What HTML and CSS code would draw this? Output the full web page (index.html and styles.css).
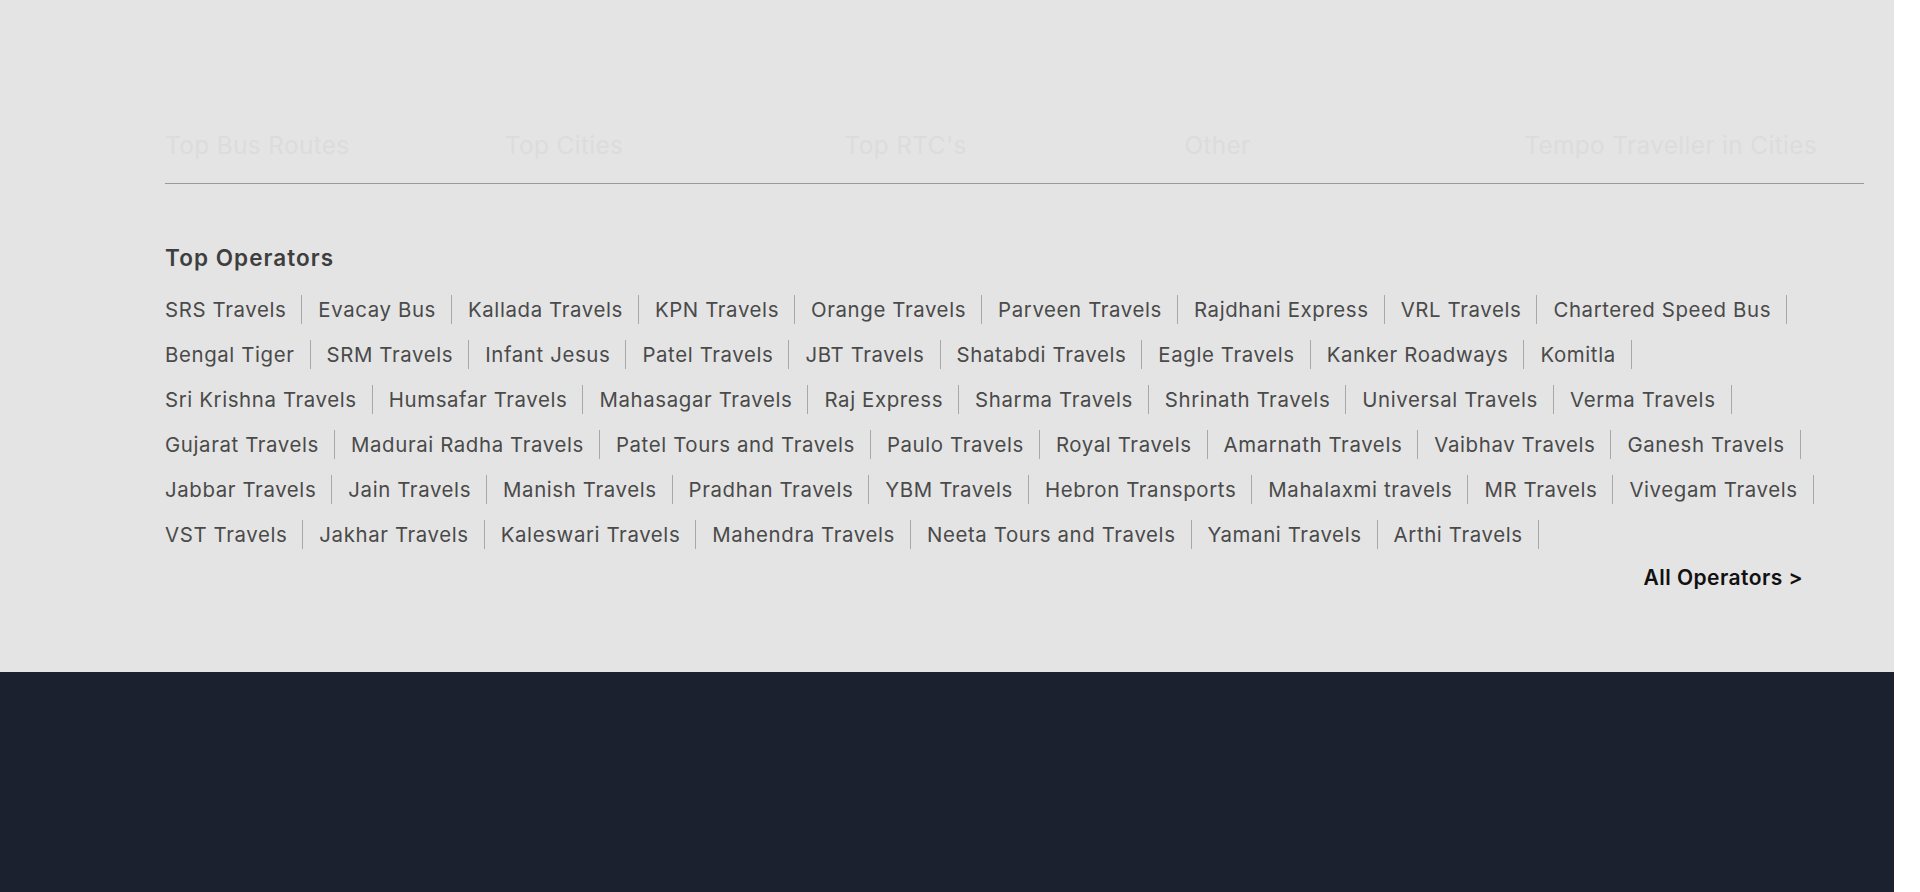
FILE: index.html
```html
<!DOCTYPE html>
<html lang="en">
<head>
<meta charset="utf-8">
<title>Top Operators</title>
<link rel="stylesheet" href="styles.css">
</head>
<body>
<div class="page">
  <section class="links">
    <div class="container">
      <nav class="tabs">
        <div class="tab">Top Bus Routes</div>
        <div class="tab">Top Cities</div>
        <div class="tab">Top RTC's</div>
        <div class="tab">Other</div>
        <div class="tab">Tempo Traveller in Cities</div>
      </nav>
      <h2 class="heading">Top Operators</h2>
      <ul class="operators">
        <li class="op">SRS Travels</li>
        <li class="op">Evacay Bus</li>
        <li class="op">Kallada Travels</li>
        <li class="op">KPN Travels</li>
        <li class="op">Orange Travels</li>
        <li class="op">Parveen Travels</li>
        <li class="op">Rajdhani Express</li>
        <li class="op">VRL Travels</li>
        <li class="op">Chartered Speed Bus</li>
        <li class="op">Bengal Tiger</li>
        <li class="op">SRM Travels</li>
        <li class="op">Infant Jesus</li>
        <li class="op">Patel Travels</li>
        <li class="op">JBT Travels</li>
        <li class="op">Shatabdi Travels</li>
        <li class="op">Eagle Travels</li>
        <li class="op">Kanker Roadways</li>
        <li class="op">Komitla</li>
        <li class="op">Sri Krishna Travels</li>
        <li class="op">Humsafar Travels</li>
        <li class="op">Mahasagar Travels</li>
        <li class="op">Raj Express</li>
        <li class="op">Sharma Travels</li>
        <li class="op">Shrinath Travels</li>
        <li class="op">Universal Travels</li>
        <li class="op">Verma Travels</li>
        <li class="op">Gujarat Travels</li>
        <li class="op">Madurai Radha Travels</li>
        <li class="op">Patel Tours and Travels</li>
        <li class="op">Paulo Travels</li>
        <li class="op">Royal Travels</li>
        <li class="op">Amarnath Travels</li>
        <li class="op">Vaibhav Travels</li>
        <li class="op">Ganesh Travels</li>
        <li class="op">Jabbar Travels</li>
        <li class="op">Jain Travels</li>
        <li class="op">Manish Travels</li>
        <li class="op">Pradhan Travels</li>
        <li class="op">YBM Travels</li>
        <li class="op">Hebron Transports</li>
        <li class="op">Mahalaxmi travels</li>
        <li class="op">MR Travels</li>
        <li class="op">Vivegam Travels</li>
        <li class="op">VST Travels</li>
        <li class="op">Jakhar Travels</li>
        <li class="op">Kaleswari Travels</li>
        <li class="op">Mahendra Travels</li>
        <li class="op">Neeta Tours and Travels</li>
        <li class="op">Yamani Travels</li>
        <li class="op">Arthi Travels</li>
      </ul>
      <div class="more-row"><a class="more" href="#">All Operators &gt;</a></div>
    </div>
  </section>
  <footer class="footer"></footer>
</div>
</body>
</html>
```

FILE: styles.css
```css
html, body {
  margin: 0;
  padding: 0;
  background: #ffffff;
}

body {
  font-family: Inter, "Open Sans", "DejaVu Sans", sans-serif;
}

.page {
  width: calc(100% - 26px);
}

.links {
  background: #e4e4e4;
  height: 672px;
  box-sizing: border-box;
  padding-left: 165px;
  padding-right: 30px;
}

.container {
  display: flex;
  flex-direction: column;
}

.tabs {
  display: grid;
  grid-template-columns: repeat(5, 1fr);
  padding-top: 129px;
  padding-bottom: 22px;
  border-bottom: 1px solid #9a9a9a;
}

.tab {
  font-size: 24.5px;
  line-height: 32px;
  letter-spacing: 0.3px;
  color: #dcdcdc;
  white-space: nowrap;
}

.heading {
  margin: 59px 0 0;
  font-size: 22.5px;
  line-height: 30px;
  font-weight: 600;
  letter-spacing: 1.05px;
  color: #3e3e3e;
}

.operators {
  list-style: none;
  margin: 22px 0 0;
  padding: 0;
  display: flex;
  flex-wrap: wrap;
  row-gap: 16px;
}

.op {
  font-size: 20.4px;
  line-height: 29px;
  letter-spacing: 0.62px;
  color: #4a4a4a;
  padding-right: 15px;
  margin-right: 16px;
  border-right: 1px solid #a8a8a8;
  white-space: nowrap;
}

.more-row {
  display: flex;
  justify-content: flex-end;
  padding-right: 61px;
  margin-top: 17px;
}

.more {
  font-size: 21px;
  line-height: 24px;
  font-weight: 600;
  letter-spacing: 0.45px;
  color: #111111;
  text-decoration: none;
}

.footer {
  background: #1c2130;
  height: 220px;
}
```
